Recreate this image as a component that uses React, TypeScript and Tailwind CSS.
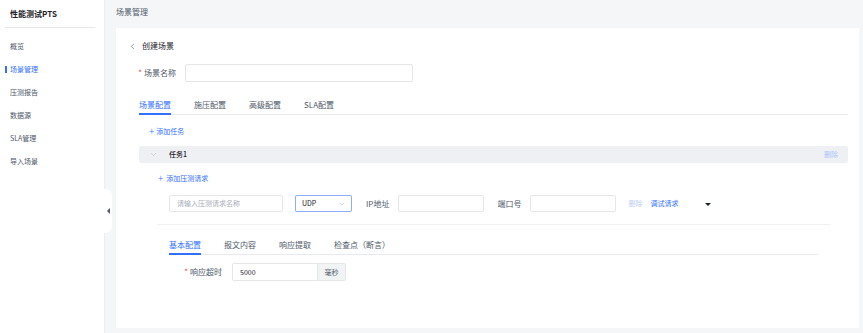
import React from "react";
import { ChevronLeft, ChevronDown } from "lucide-react";

const font = { fontFamily: '"Noto Sans CJK SC", "Noto Sans", sans-serif' };

function Tabs({ items, active, className }: { items: string[]; active: number; className: string }) {
  return (
    <div className={`flex gap-[23px] border-b border-[#e8eaee] ${className}`}>
      {items.map((t, i) => (
        <div
          key={t}
          className={`-mb-px h-[20px] border-b-2 pt-[1px] text-[8px] leading-[17px] ${
            i === active ? "border-[#3370ff] text-[#3370ff]" : "border-transparent text-[#4e5969]"
          }`}
        >
          {t}
        </div>
      ))}
    </div>
  );
}

export default function App() {
  const menu = ["概览", "场景管理", "压测报告", "数据源", "SLA管理", "导入场景"];
  return (
    <div className="flex h-[333px] w-[863px] overflow-hidden bg-[#f5f6f8]" style={font}>
      {/* Sidebar */}
      <div className="relative flex h-full w-[105px] shrink-0 flex-col border-r border-[#eceef2] bg-white">
        <div className="flex h-[27px] items-center pl-[10px] text-[8px] font-bold text-[#1d2129]">性能测试PTS</div>
        <div className="mx-[5px] h-px w-[90px] bg-[#e5e6eb]" />
        <div className="mt-[7px] flex flex-col">
          {menu.map((m, i) => (
            <div key={m} className="relative flex h-[23px] items-center pl-[10px] text-[7px]">
              {i === 1 && <div className="absolute left-[5px] top-[8px] h-[7px] w-[2px] bg-[#3370ff]" />}
              <span className={i === 1 ? "text-[#3370ff]" : "text-[#4e5969]"}>{m}</span>
            </div>
          ))}
        </div>
        <div className="absolute right-[-8px] top-[189px] flex h-[44px] w-[8px] items-center justify-center rounded-r-[6px] bg-white">
          <div className="h-0 w-0 border-y-[3px] border-r-[3px] border-y-transparent border-r-[#4e5969]" />
        </div>
      </div>

      {/* Main */}
      <div className="flex min-w-0 flex-1 flex-col">
        <div className="flex h-[28px] shrink-0 items-center pl-[11px] pb-[5px] text-[8px] text-[#4e5969]">场景管理</div>
        <div className="ml-[11px] mr-[4px] h-[300px] bg-white pl-[14px] pt-[12px]">
          {/* back */}
          <div className="flex h-[12px] items-center text-[8px] text-[#1d2129]">
            <ChevronLeft size={9} strokeWidth={1.6} className="-ml-[2px] mr-[5px] text-[#4e5969]" />
            创建场景
          </div>
          {/* name */}
          <div className="mt-[12px] flex h-[18px] items-center">
            <div className="w-[46px] text-right text-[8px] text-[#4e5969]">
              <span className="mr-[2px] text-[#f53f3f]">*</span>场景名称
            </div>
            <div className="ml-[9px] h-[18px] w-[228px] rounded-[2px] border border-[#e5e6eb] bg-white" />
          </div>

          {/* main tabs */}
          <Tabs items={["场景配置", "施压配置", "高级配置", "SLA配置"]} active={0} className="ml-[9px] mt-[13px] w-[709px]" />

          <div className="ml-[9px] w-[709px]">
            <div className="mt-[10px] flex h-[12px] items-center pl-[10px] text-[7px] text-[#3370ff]">
              <span className="mr-[2px] text-[10px] leading-none font-light">+</span>添加任务
            </div>
            <div className="mt-[9px] flex h-[17px] items-center rounded-[2px] bg-[#eff0f3] pl-[10px] pr-[10px]">
              <ChevronDown size={9} strokeWidth={1.4} className="text-[#b5b9c2]" />
              <span className="ml-[11px] text-[7px] font-medium text-[#1d2129]">任务1</span>
              <span className="ml-auto text-[7px] text-[#aac4fb]">删除</span>
            </div>
            <div className="mt-[9px] flex h-[12px] items-center pl-[19px] text-[7px] text-[#3370ff]">
              <span className="mr-[3px] text-[10px] leading-none font-light">+</span>添加压测请求
            </div>
            {/* request row */}
            <div className="mt-[11px] flex h-[17px] items-center pl-[30px]">
              <div className="flex h-[17px] w-[114px] items-center rounded-[2px] border border-[#e5e6eb] pl-[7px] text-[7px] text-[#a9aeb8]">
                请输入压测请求名称
              </div>
              <div className="ml-[12px] flex h-[17px] w-[57px] items-center justify-between rounded-[2px] bg-white pl-[7px] pr-[6px] text-[7px] text-[#1d2129] ring-1 ring-inset ring-[#8eaefb]">
                <span>UDP</span>
                <ChevronDown size={8} strokeWidth={1.3} className="text-[#a9aeb8]" />
              </div>
              <span className="ml-[14px] text-[8px] text-[#4e5969]">IP地址</span>
              <div className="ml-[9px] h-[17px] w-[86px] rounded-[2px] border border-[#e5e6eb]" />
              <span className="ml-[13px] text-[8px] text-[#4e5969]">端口号</span>
              <div className="ml-[9px] h-[17px] w-[86px] rounded-[2px] border border-[#e5e6eb]" />
              <span className="ml-[12px] text-[7px] text-[#bcd0fb]">删除</span>
              <span className="ml-[8px] text-[7px] text-[#3370ff]">调试请求</span>
              <div className="ml-[27px] mt-[1px] h-0 w-0 border-x-[3px] border-t-[3px] border-x-transparent border-t-[#1d2129]" />
            </div>
            <div className="ml-[18px] mt-[12px] h-px w-[673px] bg-[#f0f1f4]" />

            {/* sub tabs */}
            <Tabs items={["基本配置", "报文内容", "响应提取", "检查点（断言）"]} active={0} className="ml-[30px] mt-[10px] w-[649px]" />

            <div className="mt-[8px] flex h-[18px] items-center">
              <div className="w-[83px] text-right text-[8px] text-[#4e5969]">
                <span className="mr-[2px] text-[#f53f3f]">*</span>响应超时
              </div>
              <div className="ml-[10px] flex h-[18px] w-[86px] items-center rounded-l-[2px] border border-[#e5e6eb] pl-[7px] text-[7px] text-[#1d2129]">
                5000
              </div>
              <div className="flex h-[18px] w-[28px] items-center justify-center rounded-r-[2px] border border-l-0 border-[#e5e6eb] bg-[#f2f3f5] text-[7px] text-[#4e5969]">
                毫秒
              </div>
            </div>
          </div>
        </div>
      </div>
    </div>
  );
}
